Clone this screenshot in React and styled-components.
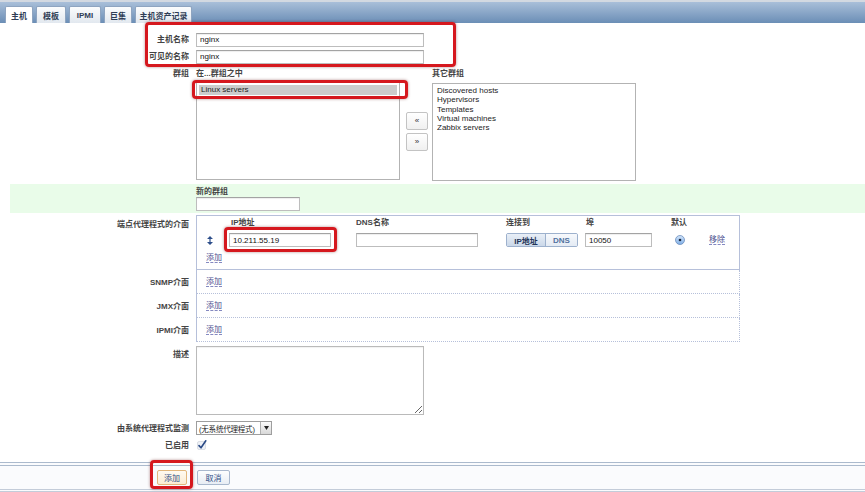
import React from 'react';
import styled, { createGlobalStyle } from 'styled-components';

const GlobalStyle = createGlobalStyle`
  html, body { margin: 0; padding: 0; background: #fff; }
  body { font-family: "Liberation Sans", "Noto Sans CJK SC", sans-serif; }
`;

const Page = styled.div`
  position: relative;
  width: 865px;
  height: 492px;
  overflow: hidden;
  background: #fff;
  font-size: 8px;
  color: #222;
`;

// tabs on top
const TabBar = styled.div`
  height: 21px;
  border-top: 2px solid #d3d9e1;
  background: linear-gradient(#a9bfd9, #6b8eb6);
  display: flex;
  align-items: flex-end;
  gap: 3px;
  padding-left: 5px;
`;

const Tab = styled.div`
  width: ${p => p.$w}px;
  height: 17px;
  box-sizing: border-box;
  display: flex;
  align-items: center;
  justify-content: center;
  font-weight: bold;
  color: #2f3d55;
  background: ${p => (p.$active ? '#fff' : 'linear-gradient(#fbfcfd, #e2e8ef)')};
  border: 1px solid #8ea4c0;
  border-bottom: none;
  border-radius: 2px 2px 0 0;
`;

const Form = styled.div`
  padding: 8px 0 0 10px;
`;

const Row = styled.div`
  display: grid;
  grid-template-columns: 179px 1fr;
  column-gap: 7px;
  align-items: ${p => (p.$top ? 'start' : 'center')};
  min-height: ${p => p.$h || 17}px;
  margin-top: ${p => p.$mt || 0}px;
  background: ${p => p.$bg || 'transparent'};
`;

const Label = styled.div`
  text-align: right;
  font-weight: bold;
  color: #444;
  line-height: 9px;
  white-space: nowrap;
  padding-top: ${p => p.$pt || 0}px;
`;

const Caption = styled.div`
  font-weight: bold;
  color: #444;
  line-height: 9px;
  white-space: nowrap;
  padding-left: ${p => p.$pl || 0}px;
`;

const TextInput = styled.input`
  display: block;
  box-sizing: border-box;
  width: ${p => p.$w}px;
  height: 14px;
  margin: ${p => p.$m || 0};
  padding: 0 3px;
  border: 1px solid #bdbdbd;
  border-top-color: #a3a3a3;
  box-shadow: inset 0 1px 1px rgba(0, 0, 0, 0.07);
  font-family: inherit;
  font-size: 8px;
  color: #111;
  background: #fff;
  outline: none;
`;

// groups
const GroupGrid = styled.div`
  display: grid;
  grid-template-columns: 204px 32px 204px;
  grid-template-rows: 9px 98px;
  row-gap: 4px;
`;

const ListBox = styled.div`
  box-sizing: border-box;
  height: 98px;
  margin-top: ${p => p.$mt || 0}px;
  border: 1px solid #b3b3b3;
  padding: 2px;
  background: #fff;
`;

const ListItem = styled.div`
  line-height: 9.25px;
  height: ${p => (p.$selected ? '10px' : 'auto')};
  padding-left: 2px;
  color: #1c1c1c;
  background: ${p => (p.$selected ? '#cccccc' : 'transparent')};
`;

const ArrowCol = styled.div`
  display: flex;
  flex-direction: column;
  justify-content: center;
  gap: 3px;
  padding: 0 0 0 6px;
`;

const ArrowButton = styled.div`
  width: 22px;
  height: 18px;
  box-sizing: border-box;
  border: 1px solid #c3c3c3;
  border-radius: 2px;
  background: linear-gradient(#fff, #f0f0f0);
  display: flex;
  align-items: center;
  justify-content: center;
  color: #333;
  font-size: 8px;
`;

const NewGroup = styled.div`
  padding: 3px 0 2px;
`;

// interfaces
const IfaceBox = styled.div`
  box-sizing: border-box;
  width: 544px;
  height: ${p => p.$h}px;
  border-left: 1px solid #b6c0da;
  border-right: 1px ${p => (p.$first ? 'solid' : 'dotted')} #b6c0da;
  border-bottom: 1px ${p => (p.$first ? 'solid' : 'dotted')} #b6c0da;
  border-top: ${p => (p.$first ? '1px solid #b6c0da' : 'none')};
`;

const IfaceGrid = styled.div`
  display: grid;
  grid-template-columns: 32px 127px 150px 79px 86px 34px 1fr;
  grid-template-rows: 9px 14px 9px;
  row-gap: 6px;
  align-items: center;
  padding-top: 2px;
`;

const SimpleIface = styled.div`
  height: 100%;
  display: flex;
  align-items: center;
  padding-left: 9px;
`;

const LinkText = styled.span`
  color: #4b4f8f;
  line-height: 9px;
  border-bottom: 1px dashed #8589c0;
  margin-left: ${p => p.$ml || 0}px;
  justify-self: start;
`;

const AddCell = styled.div`
  grid-column: 1 / span 2;
  padding-left: 9px;
`;

const HandleCell = styled.div`
  padding-left: 10px;
  display: flex;
  align-items: center;
`;

const Segmented = styled.div`
  display: flex;
  width: 72px;
  height: 14px;
  box-sizing: border-box;
  border: 1px solid #9db1cd;
  border-radius: 2px;
  overflow: hidden;
`;

const SegButton = styled.div`
  width: ${p => p.$w}px;
  display: flex;
  align-items: center;
  justify-content: center;
  font-weight: bold;
  color: ${p => (p.$active ? '#1f3459' : '#52729f')};
  background: ${p => (p.$active ? 'linear-gradient(#e9eff7, #cbd8e9)' : 'linear-gradient(#f7f9fc, #e4ebf4)')};
  border-left: ${p => (p.$active ? 'none' : '1px solid #9db1cd')};
`;

const RadioCell = styled.div`
  padding-left: 4px;
  display: flex;
  align-items: center;
`;

const TextArea = styled.textarea`
  display: block;
  box-sizing: border-box;
  width: 228px;
  height: 69px;
  margin: 0;
  border: 1px solid #bababa;
  box-shadow: inset 0 1px 1px rgba(0, 0, 0, 0.06);
  font-family: inherit;
  font-size: 8px;
  outline: none;
`;

const SelectBox = styled.div`
  display: flex;
  box-sizing: border-box;
  width: 76px;
  height: 14px;
  border: 1px solid #9e9e9e;
  background: #fff;
`;

const SelectText = styled.div`
  flex: 1;
  padding-left: 2px;
  display: flex;
  align-items: center;
  color: #222;
  font-size: 7.5px;
  letter-spacing: -0.2px;
  white-space: nowrap;
  overflow: hidden;
`;

const SelectArrow = styled.div`
  width: 10px;
  border-left: 1px solid #b0b0b0;
  background: linear-gradient(#fbfbfb, #d8d8d8);
  display: flex;
  align-items: center;
  justify-content: center;
`;

const CheckCell = styled.div`
  padding-left: 1px;
  display: flex;
  align-items: center;
`;

// footer
const Footer = styled.div`
  margin-top: 9px;
  border-top: 4px double #abbacd;
  border-bottom: 3px double #c3ccd9;
  background: #fafbfd;
  padding: 4px 0 4px 10px;
  display: grid;
  grid-template-columns: 179px 1fr;
  column-gap: 7px;
`;

const FooterButton = styled.div`
  width: ${p => p.$w}px;
  height: 15px;
  box-sizing: border-box;
  justify-self: ${p => (p.$end ? 'end' : 'start')};
  margin: ${p => (p.$end ? '0 2px 0 0' : '0 0 0 1px')};
  display: flex;
  align-items: center;
  justify-content: center;
  border-radius: 2px;
  color: #2f4f86;
  border: 1px solid ${p => (p.$focus ? '#e2b77c' : '#a9b8cd')};
  background: ${p => (p.$focus ? 'linear-gradient(#fffaf1, #fbecd3)' : 'linear-gradient(#fdfefe, #e8edf4)')};
`;

// red annotation boxes drawn over the screenshot
const Annot = styled.div`
  position: absolute;
  left: ${p => p.$x}px;
  top: ${p => p.$y}px;
  width: ${p => p.$w}px;
  height: ${p => p.$h}px;
  box-sizing: border-box;
  border: 3px solid #d5181e;
  border-radius: 4px;
  box-shadow: 0 0 3px rgba(90, 0, 0, 0.45);
  pointer-events: none;
`;

const HandleIcon = () => (
  <svg width="6" height="9" viewBox="0 0 6 9">
    <path d="M3 0 L6 3 L0 3 Z M3 9 L6 6 L0 6 Z" fill="#2d4e8a" />
    <rect x="2.4" y="2.5" width="1.2" height="4" fill="#2d4e8a" />
  </svg>
);

const RadioIcon = () => (
  <svg width="10" height="10" viewBox="0 0 10 10">
    <defs>
      <linearGradient id="rg" x1="0" y1="0" x2="0" y2="1">
        <stop offset="0" stopColor="#d4e6fb" />
        <stop offset="1" stopColor="#7eaee6" />
      </linearGradient>
    </defs>
    <circle cx="5" cy="5" r="4.5" fill="url(#rg)" stroke="#6f8fbd" strokeWidth="0.8" />
    <circle cx="5" cy="5" r="1.3" fill="#1d2a3f" />
  </svg>
);

const CheckIcon = () => (
  <svg width="10" height="10" viewBox="0 0 10 10">
    <rect x="0.5" y="1.5" width="8" height="8" rx="1.5" fill="#eef1f6" stroke="#c9cfd8" strokeWidth="0.6" />
    <path d="M2 5.6 L4 7.8 L8.8 0.8" fill="none" stroke="#2a4a86" strokeWidth="1.6" strokeLinecap="round" strokeLinejoin="round" />
  </svg>
);

const otherGroups = ['Discovered hosts', 'Hypervisors', 'Templates', 'Virtual machines', 'Zabbix servers'];

const App = () => {
  return (
    <Page>
      <GlobalStyle />
      <TabBar>
        <Tab $w={28} $active>主机</Tab>
        <Tab $w={30}>模板</Tab>
        <Tab $w={32}>IPMI</Tab>
        <Tab $w={28}>巨集</Tab>
        <Tab $w={57}>主机资产记录</Tab>
      </TabBar>

      <Form>
        <Row>
          <Label>主机名称</Label>
          <TextInput $w={228} value="nginx" readOnly />
        </Row>
        <Row>
          <Label>可见的名称</Label>
          <TextInput $w={228} value="nginx" readOnly />
        </Row>

        <Row $top $mt={4}>
          <Label>群组</Label>
          <GroupGrid>
            <Caption>在...群组之中</Caption>
            <div />
            <Caption>其它群组</Caption>
            <ListBox>
              <ListItem $selected>Linux servers</ListItem>
            </ListBox>
            <ArrowCol>
              <ArrowButton>«</ArrowButton>
              <ArrowButton>»</ArrowButton>
            </ArrowCol>
            <ListBox $mt={1}>
              {otherGroups.map(g => (
                <ListItem key={g}>{g}</ListItem>
              ))}
            </ListBox>
          </GroupGrid>
        </Row>

        <Row $top $mt={4} $h={29} $bg="#e9fce9">
          <Label />
          <NewGroup>
            <Caption>新的群组</Caption>
            <TextInput $w={104} $m="1px 0 0" readOnly />
          </NewGroup>
        </Row>

        <Row $top $mt={2}>
          <Label $pt={5}>端点代理程式的介面</Label>
          <IfaceBox $first $h={55}>
            <IfaceGrid>
              <div />
              <Caption $pl={2}>IP地址</Caption>
              <Caption>DNS名称</Caption>
              <Caption>连接到</Caption>
              <Caption $pl={1}>埠</Caption>
              <Caption>默认</Caption>
              <div />

              <HandleCell><HandleIcon /></HandleCell>
              <TextInput $w={102} value="10.211.55.19" readOnly />
              <TextInput $w={122} readOnly />
              <Segmented>
                <SegButton $w={39} $active>IP地址</SegButton>
                <SegButton $w={32}>DNS</SegButton>
              </Segmented>
              <TextInput $w={67} value="10050" readOnly />
              <RadioCell><RadioIcon /></RadioCell>
              <LinkText $ml={4}>移除</LinkText>

              <AddCell><LinkText>添加</LinkText></AddCell>
            </IfaceGrid>
          </IfaceBox>
        </Row>

        {['SNMP介面', 'JMX介面', 'IPMI介面'].map(name => (
          <Row key={name} $h={24}>
            <Label>{name}</Label>
            <IfaceBox $h={24}>
              <SimpleIface><LinkText>添加</LinkText></SimpleIface>
            </IfaceBox>
          </Row>
        ))}

        <Row $top $mt={4}>
          <Label $pt={4}>描述</Label>
          <TextArea readOnly />
        </Row>

        <Row $mt={6} $h={14}>
          <Label>由系统代理程式监测</Label>
          <SelectBox>
            <SelectText>(无系统代理程式)</SelectText>
            <SelectArrow>
              <svg width="5" height="4" viewBox="0 0 5 4"><path d="M0 0 L5 0 L2.5 4 Z" fill="#222" /></svg>
            </SelectArrow>
          </SelectBox>
        </Row>

        <Row $mt={2} $h={16}>
          <Label>已启用</Label>
          <CheckCell><CheckIcon /></CheckCell>
        </Row>
      </Form>

      <Footer>
        <FooterButton $w={30} $end $focus>添加</FooterButton>
        <FooterButton $w={33}>取消</FooterButton>
      </Footer>

      <Annot $x={145} $y={22} $w={311} $h={45} />
      <Annot $x={192} $y={80} $w={216} $h={19} />
      <Annot $x={224} $y={227} $w={113} $h={25} />
      <Annot $x={150} $y={460} $w={43} $h={29} />
    </Page>
  );
};

export default App;
